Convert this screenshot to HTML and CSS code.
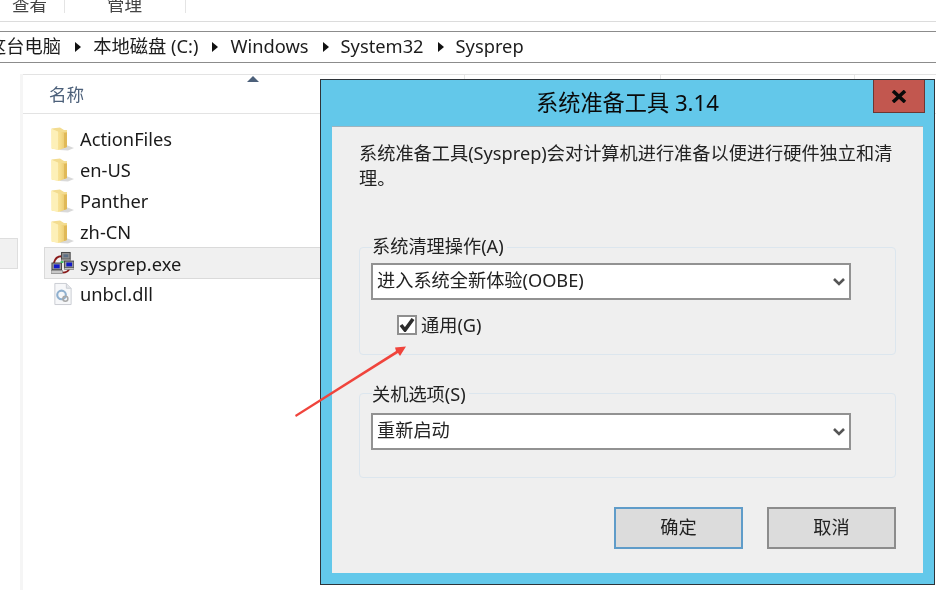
FILE: index.html
```html
<!DOCTYPE html>
<html lang="zh-CN">
<head>
<meta charset="utf-8">
<title>系统准备工具</title>
<link rel="stylesheet" href="styles.css">
</head>
<body>
<svg class="defs" width="0" height="0">
  <defs>
    <linearGradient id="fold" x1="0" y1="0" x2="1" y2="0">
      <stop offset="0" stop-color="#fff2b8"/>
      <stop offset="0.6" stop-color="#f5dc8a"/>
      <stop offset="1" stop-color="#e6c265"/>
    </linearGradient>
    <symbol id="folder" viewBox="0 0 23 24">
      <path d="M10 16 L23 21 L17 23.5 L9 23 Z" fill="#c4c4c4" opacity=".65"/>
      <path d="M0.5 1.5 L9 0.5 L13 3 L16 3 L16 19 L1 22 Z" fill="#f3dc90"/>
      <path d="M0.5 2 L8 5 L16 5 L16 20 L8 23 L0.5 21.5 Z" fill="url(#fold)"/>
      <path d="M0.5 2 L7 4.5 L7 22.8 L0.5 21.5 Z" fill="#fdf0b8"/>
      <path d="M13 6 L16 6 L16 20 L13 21 Z" fill="#e0b958"/>
    </symbol>
  </defs>
</svg>
<div class="page">
  <div class="ribbon">
    <span class="tab tab-view">查看</span>
    <span class="tab tab-manage">管理</span>
  </div>
  <div class="crumbs">
    <span class="crumb crumb-first">这台电脑</span><i class="sep"></i>
    <span class="crumb">本地磁盘 (C:)</span><i class="sep"></i>
    <span class="crumb">Windows</span><i class="sep"></i>
    <span class="crumb">System32</span><i class="sep"></i>
    <span class="crumb">Sysprep</span>
  </div>
  <div class="explorer">
    <div class="nav"><div class="nav-item"></div></div>
    <div class="list">
      <div class="head">
        <span class="col col-name">名称<i class="sort"></i></span>
        <span class="col col-date"></span>
        <span class="col col-type"></span>
        <span class="col col-size"></span>
      </div>
      <div class="row"><svg class="ico"><use href="#folder"/></svg><span>ActionFiles</span></div>
      <div class="row"><svg class="ico"><use href="#folder"/></svg><span>en-US</span></div>
      <div class="row"><svg class="ico"><use href="#folder"/></svg><span>Panther</span></div>
      <div class="row"><svg class="ico"><use href="#folder"/></svg><span>zh-CN</span></div>
      <div class="row row-sel">
        <svg class="ico" viewBox="0 0 24 24">
          <path d="M3 12 C4 8 6 5 11 5" fill="none" stroke="#8a1a1a" stroke-width="2"/>
          <path d="M12 22 C15 22 18 21 19 18" fill="none" stroke="#8a1a1a" stroke-width="2"/>
          <rect x="11" y="1" width="9" height="7" fill="#8f8f8f" stroke="#444"/>
          <rect x="13" y="3" width="5" height="3" fill="#5c6f86"/>
          <rect x="11" y="8" width="9" height="2" fill="#bdbdbd" stroke="#555" stroke-width=".5"/>
          <rect x="14" y="10" width="10" height="7" fill="#9a9a9a" stroke="#444"/>
          <rect x="16" y="11.5" width="6" height="4" fill="#1219c8"/>
          <rect x="14" y="17" width="10" height="2" fill="#c8c8c8" stroke="#555" stroke-width=".5"/>
          <rect x="1" y="12" width="10" height="7" fill="#9a9a9a" stroke="#444"/>
          <rect x="3" y="13.5" width="6" height="4" fill="#1219c8"/>
          <rect x="0" y="20" width="12" height="3" fill="#c8c8c8" stroke="#555" stroke-width=".5"/>
          <rect x="10" y="10" width="3" height="2" fill="#3fbf5f"/>
        </svg><span>sysprep.exe</span>
      </div>
      <div class="row">
        <svg class="ico" viewBox="0 0 24 24">
          <path d="M4 1 H16 L21 6 V23 H4 Z" fill="#f6f7f9" stroke="#c9ccd2"/>
          <path d="M16 1 V6 H21" fill="#e4e6ea" stroke="#c9ccd2"/>
          <circle cx="11" cy="13" r="4.5" fill="none" stroke="#8fb0cf" stroke-width="2.2"/>
          <circle cx="15" cy="17" r="2.6" fill="none" stroke="#a8a8a8" stroke-width="1.6"/>
        </svg><span>unbcl.dll</span>
      </div>
    </div>
  </div>
</div>

<section class="dialog">
  <div class="titlebar">
    <h1 class="title">系统准备工具 3.14</h1>
    <button class="close" aria-label="关闭">
      <svg width="16" height="13" viewBox="0 0 16 13"><path d="M2 1 L14 12 M14 1 L2 12" stroke="#0a0a0a" stroke-width="3.6"/></svg>
    </button>
  </div>
  <div class="client">
    <p class="intro">系统准备工具(Sysprep)会对计算机进行准备以便进行硬件独立和清理。</p>
    <div class="group group-a">
      <div class="legend">系统清理操作(A)</div>
      <div class="combo"><span>进入系统全新体验(OOBE)</span><svg width="12" height="8" viewBox="0 0 12 8"><path d="M1 1 L6 6 L11 1" fill="none" stroke="#555" stroke-width="2.6"/></svg></div>
      <label class="check">
        <span class="box"><svg width="16" height="14" viewBox="0 0 16 14"><path d="M2 7 L6 12 L14 1" fill="none" stroke="#2c2c2c" stroke-width="3.6"/></svg></span>
        <span>通用(G)</span>
      </label>
    </div>
    <div class="group group-b">
      <div class="legend">关机选项(S)</div>
      <div class="combo"><span>重新启动</span><svg width="12" height="8" viewBox="0 0 12 8"><path d="M1 1 L6 6 L11 1" fill="none" stroke="#555" stroke-width="2.6"/></svg></div>
    </div>
    <div class="actions">
      <button class="btn btn-default">确定</button>
      <button class="btn">取消</button>
    </div>
  </div>
</section>

<svg class="arrow" width="120" height="80" viewBox="0 0 120 80">
  <path d="M0 75 L101 11 L100 7.5 L111 6.5 L105 16 L103 13 L1 77 Z" fill="#f0443c"/>
</svg>
</body>
</html>
```
FILE: styles.css
```css
* { box-sizing: border-box; }
html, body { margin: 0; padding: 0; }
body {
  position: relative;
  width: 936px;
  height: 590px;
  overflow: hidden;
  background: #fff;
  font-family: "Noto Sans", "Noto Sans CJK SC", sans-serif;
  color: #1a1a1a;
}
.defs { position: absolute; }
.page { display: flex; flex-direction: column; height: 100%; filter: blur(0.25px); }

.ribbon {
  height: 22px;
  border-bottom: 1px solid #dcdcdc;
  display: flex;
  align-items: flex-start;
  flex: none;
}
.tab {
  height: 13px;
  font-size: 17.5px;
  line-height: 17px;
  color: #444;
  display: flex;
  align-items: flex-end;
  border-right: 1px solid #e4e4e4;
}
.tab-view { width: 65px; padding-left: 12px; }
.tab-manage { width: 121px; padding-left: 42px; }

.crumbs {
  margin-top: 9px;
  height: 32px;
  flex: none;
  border-top: 1px solid #8c8c8c;
  border-bottom: 1px solid #8c8c8c;
  padding-bottom: 2px;
  display: flex;
  align-items: center;
  font-size: 18.3px;
  line-height: 28px;
  color: #1c1c1c;
  white-space: nowrap;
}
.crumb-first { margin-left: -12px; }
.sep {
  width: 0;
  height: 0;
  margin: 2px 12px 0 14px;
  border-left: 6px solid #111;
  border-top: 5px solid transparent;
  border-bottom: 5px solid transparent;
}

.explorer { display: flex; flex: 1; padding-top: 11px; }
.nav { width: 23px; flex: none; border-right: 3px solid #f5f5f5; padding-top: 164px; }
.nav-item { width: 18px; height: 31px; background: #f1f1f1; border: 1px solid #dedede; border-left: 0; }

.list { flex: 1; display: flex; flex-direction: column; }
.head {
  height: 40px;
  display: flex;
  border-top: 1px solid #e3e3e3;
  border-bottom: 1px solid #e3e3e3;
  margin-bottom: 9px;
  flex: none;
}
.col { position: relative; border-right: 1px solid #e6e6e6; color: #4c607a; font-size: 17.6px; line-height: 38px; }
.col-name { width: 442px; padding-left: 26px; }
.col-date { width: 196px; }
.col-type { width: 194px; }
.col-size { flex: 1; border-right: 0; }
.sort {
  position: absolute;
  left: 224px;
  top: 1px;
  width: 0;
  height: 0;
  border-left: 6px solid transparent;
  border-right: 6px solid transparent;
  border-bottom: 6px solid #4c607a;
}

.row {
  height: 31px;
  margin-left: 21px;
  width: 277px;
  display: flex;
  align-items: center;
  font-size: 18.3px;
  border: 1px solid transparent;
  padding-left: 6px;
  gap: 6px;
}
.row-sel { background: #f0f0f0; border-color: #dadada; height: 32px; margin: 0 0 -1px 21px; }
.ico { width: 23px; height: 24px; flex: none; }

.dialog {
  position: absolute;
  left: 320px;
  top: 79px;
  width: 615px;
  height: 506px;
  background: #63c8ea;
  border: 1px solid #2e3338;
  display: flex;
  flex-direction: column;
  padding: 0 11px 11px;
  filter: blur(0.25px);
}
.titlebar { height: 46px; flex: none; display: flex; align-items: flex-start; justify-content: center; }
.title { margin: 10px 0 0 0; font-size: 22.2px; font-weight: 400; line-height: 26px; color: #0a0a0a; }
.close {
  position: absolute;
  right: 9px;
  top: 0;
  width: 52px;
  height: 33px;
  background: #c2574f;
  border: 1px solid #6b3733;
  border-top: 0;
  padding: 0;
  display: flex;
  align-items: center;
  justify-content: center;
}
.client {
  flex: 1;
  background: #efefef;
  border-top: 1px solid #9fb4bf;
  padding: 14px 27px 0;
  font-size: 18.2px;
  color: #222;
}
.intro { margin: 0; line-height: 25px; width: 540px; height: 62px; }
.group {
  width: 537px;
  border: 1px solid #dce6ee;
  border-radius: 4px;
  padding: 0 11px;
}
.group-a { margin-top: 44px; height: 108px; }
.group-b { margin-top: 38px; height: 85px; }
.legend {
  width: fit-content;
  height: 24px;
  line-height: 24px;
  margin-left: 1px;
  padding: 0 3px 0 0;
  background: #efefef;
}
.group-a .legend { margin-top: -14px; }
.group-b .legend { margin-top: -12px; }
.combo {
  width: 480px;
  height: 37px;
  background: #fff;
  border: 2px solid #929292;
  display: flex;
  align-items: center;
  justify-content: space-between;
  padding: 0 4px 3px;
  line-height: 26px;
}
.combo svg { margin-top: 3px; }
.group-a .combo { margin-top: 5px; }
.group-b .combo { margin-top: 7px; }
.check { display: flex; align-items: center; gap: 4px; margin: 15px 0 0 26px; line-height: 20px; }
.box {
  width: 20px;
  height: 20px;
  background: #fff;
  border: 2px solid #8f8f8f;
  display: flex;
  align-items: center;
  justify-content: center;
}
.actions { display: flex; justify-content: flex-end; gap: 24px; margin-top: 29px; width: 537px; }
.btn {
  width: 129px;
  height: 42px;
  background: #dcdcdc;
  border: 2px solid #8c8c8c;
  font: inherit;
  line-height: 30px;
  color: #222;
  padding: 0 0 3px;
}
.btn-default { border-color: #5f9cc9; }

.arrow { position: absolute; left: 295px; top: 340px; }
```
